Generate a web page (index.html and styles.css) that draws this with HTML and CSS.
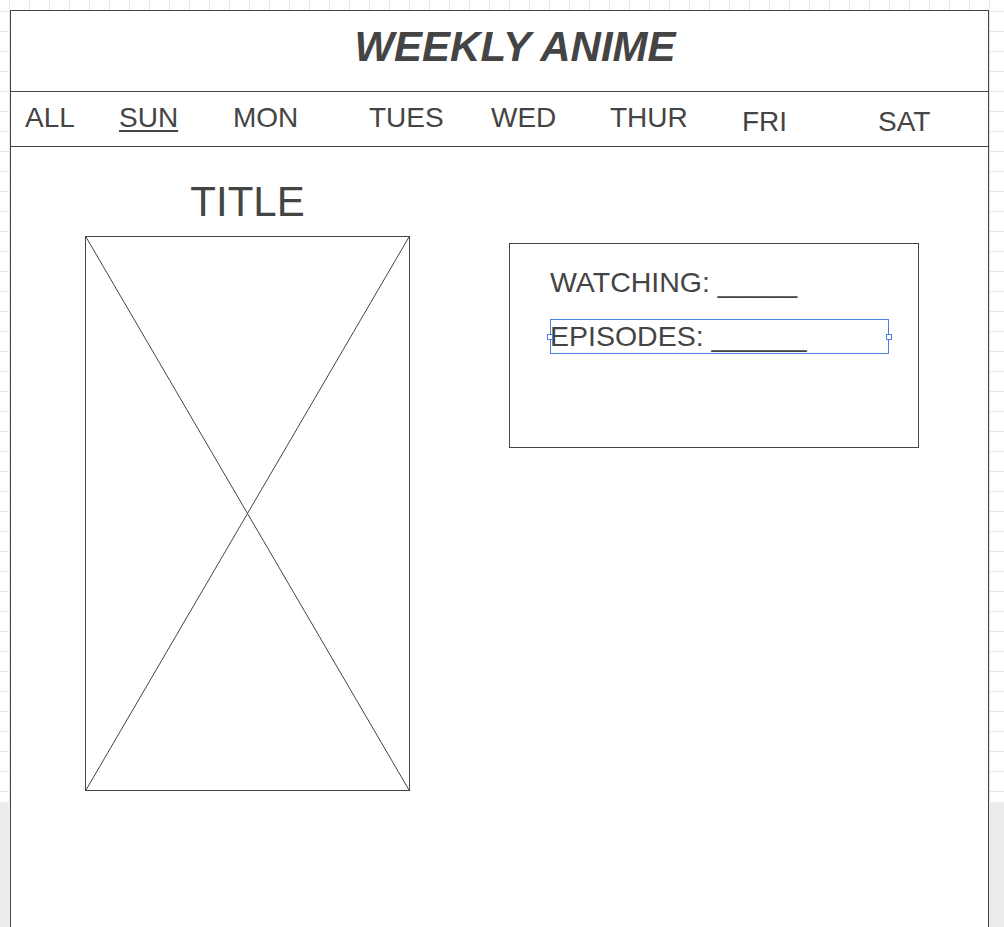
FILE: index.html
```html
<!DOCTYPE html>
<html lang="en">
<head>
    <meta charset="UTF-8">
    <meta name="viewport" content="width=device-width, initial-scale=1.0">
    <title>Weekly Anime</title>
    <link rel="stylesheet" href="styles.css">
</head>
<body>
    <div class="frame">
        <header class="masthead">
            <h1 class="brand">WEEKLY ANIME</h1>
        </header>
        <nav class="days">
            <a class="day" href="javascript:;">ALL</a>
            <a class="day day-current" href="javascript:;">SUN</a>
            <a class="day" href="javascript:;">MON</a>
            <a class="day" href="javascript:;">TUES</a>
            <a class="day" href="javascript:;">WED</a>
            <a class="day" href="javascript:;">THUR</a>
            <a class="day day-low" href="javascript:;">FRI</a>
            <a class="day day-low" href="javascript:;">SAT</a>
        </nav>
        <main class="content">
            <section class="show">
                <h2 class="show-title">TITLE</h2>
                <div class="poster">
                    <!-- placeholder picture, the usual X -->
                    <svg viewBox="0 0 100 100" preserveAspectRatio="none">
                        <line x1="0" y1="0" x2="100" y2="100" vector-effect="non-scaling-stroke"/>
                        <line x1="100" y1="0" x2="0" y2="100" vector-effect="non-scaling-stroke"/>
                    </svg>
                </div>
            </section>
            <section class="info">
                <p class="field">WATCHING: _____</p>
                <p class="field field-selected">EPISODES: ______<span class="handle handle-left"></span><span class="handle handle-right"></span></p>
            </section>
        </main>
    </div>
</body>
</html>
```

FILE: styles.css
```css
html {
    height: 100%;
    background-color: #fff;
    /* grid of the canvas, grey below it */
    background-image:
        linear-gradient(to bottom, transparent 802px, #ececec 802px),
        linear-gradient(to right, #e6e6e6 1px, transparent 1px),
        linear-gradient(to bottom, #e6e6e6 1px, transparent 1px);
    background-size: 100% 100%, 20px 20px, 20px 20px;
    background-position: 0 0, 9px 0, 0 11px;
    background-repeat: no-repeat, repeat, repeat;
}
body {
    margin: 0;
    overflow: hidden;
    font-family: "Liberation Sans", Arial, sans-serif;
    color: #444;
}
.frame {
    box-sizing: border-box;
    width: 979px;
    height: 940px;
    margin: 10px 0 0 10px;
    border: 1px solid #444;
    border-bottom: 0;
    background: #fff;
}

.masthead {
    box-sizing: border-box;
    height: 81px;
    padding: 15px 0 0 31px;
    border-bottom: 1px solid #444;
    text-align: center;
}
.brand {
    margin: 0;
    font-size: 42px;
    line-height: 42px;
    font-weight: bold;
    font-style: italic;
}

.days {
    box-sizing: border-box;
    display: grid;
    grid-template-columns: 94px 114px 136px 122px 119px 132px 136px auto;
    align-items: start;
    height: 55px;
    padding: 12px 0 0 14px;
    border-bottom: 1px solid #444;
}
.day {
    font-size: 28px;
    line-height: 28px;
    color: #444;
    text-decoration: none;
}
.day-current {
    text-decoration: underline;
    text-decoration-thickness: 2px;
    text-underline-offset: 3px;
}
.day-low {
    padding-top: 4px;
}

.content {
    display: flex;
    align-items: flex-start;
    padding: 34px 0 0 74px;
}
.show {
    width: 325px;
}
.show-title {
    margin: 0 0 13px;
    font-size: 42px;
    line-height: 42px;
    font-weight: normal;
    text-align: center;
}
.poster {
    box-sizing: border-box;
    height: 555px;
    border: 1px solid #444;
}
.poster svg {
    display: block;
    width: 100%;
    height: 100%;
    stroke: #444;
    stroke-width: 1;
}

.info {
    box-sizing: border-box;
    width: 410px;
    height: 205px;
    margin: 62px 0 0 99px;
    padding: 21px 0 0 40px;
    border: 1px solid #444;
}
.field {
    width: 339px;
    height: 35px;
    margin: 0 0 19px;
    font-size: 28.5px;
    line-height: 35px;
    white-space: nowrap;
}
.field-selected {
    position: relative;
    outline: 1px solid #4a80e8;
    outline-offset: -1px;
}
.handle {
    position: absolute;
    top: 50%;
    width: 4px;
    height: 4px;
    margin-top: -3px;
    border: 1px solid #4a80e8;
    background: #fff;
}
.handle-left {
    left: -3px;
}
.handle-right {
    right: -3px;
}
```
